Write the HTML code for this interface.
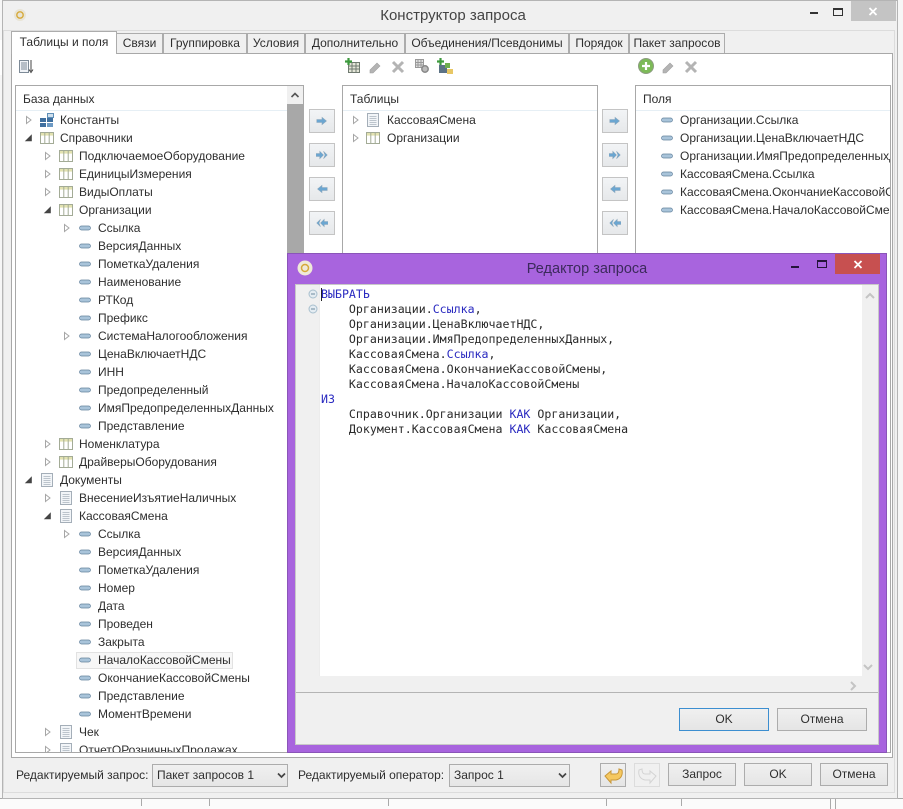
<!DOCTYPE html>
<html><head><meta charset="utf-8"><style>
html,body{margin:0;padding:0;width:903px;height:809px;overflow:hidden;background:#f6f6f6}
body{position:relative;font-family:"Liberation Sans","Noto Sans CJK JP",sans-serif;font-size:12px;color:#2e2e2e}
.b{position:absolute;box-sizing:border-box}
.t{position:absolute;white-space:nowrap;line-height:16px}
.tab{position:absolute;box-sizing:border-box;top:33px;height:20px;background:#f0f0f0;border:1px solid #acacac;border-bottom:none;text-align:center;line-height:19px;white-space:nowrap}
.btn{position:absolute;box-sizing:border-box;background:linear-gradient(#f0f0f0,#e5e5e5);border:1px solid #acacac;text-align:center;line-height:21px}
.ar{position:absolute;box-sizing:border-box;width:26px;height:24px;background:linear-gradient(#f2f4f6,#e6e8ea);border:1px solid #c4c4c4}
.ar svg{position:absolute;left:6px;top:5px;width:12px;height:12px}
.combo{position:absolute;box-sizing:border-box;top:764px;height:23px;background:linear-gradient(#f0f0f0,#e6e6e6);border:1px solid #acacac;line-height:21px;padding-left:4px}
.tree{position:absolute;overflow:hidden}
.r{position:relative;height:18px;line-height:18px;white-space:nowrap}
.r svg{position:absolute;width:16px;height:16px;top:1px}
.l0{padding-left:39px}.l1{padding-left:58px}.l2{padding-left:77px}
.l0 .o{left:0}.l0 .c{left:18px}
.l1 .o{left:19px}.l1 .c{left:37px}
.l2 .o{left:38px}.l2 .c{left:56px}
.ed{position:absolute;left:321px;top:287px;font-family:"DejaVu Sans Mono","Liberation Mono",monospace;font-size:11.6px;line-height:15px;white-space:pre;color:#2a2a2a}
.ed b{font-weight:normal;color:#2a2ac0}
svg{display:block;overflow:visible}
</style></head><body>
<svg width="0" height="0" style="position:absolute">
<symbol id="o" viewBox="0 0 16 16"><path d="M5.500 4.500l4.500 3.500-4.500 3.500z" fill="#fff" stroke="#a6a6a6"/></symbol>
<symbol id="d" viewBox="0 0 16 16"><path d="M10.500 5v6H4.500z" fill="#444" stroke="#444" stroke-width=".6"/></symbol>
<symbol id="t" viewBox="0 0 16 16"><rect x="1.500" y="2.500" width="13" height="11" fill="#fff" stroke="#a3ab96"/><rect x="2" y="3" width="12" height="2.600" fill="#e2e2b0"/><path d="M5.800 3v10M10.200 3v10" stroke="#a3ab96" fill="none"/></symbol>
<symbol id="p" viewBox="0 0 16 16"><path d="M2.500 1.500h11v13h-11z" fill="#f2f5f8" stroke="#a4aeb8"/><path d="M4.500 4.500h7M4.500 6.500h7M4.500 8.500h7M4.500 10.500h7M4.500 12.500h7" stroke="#bcc4cc" fill="none"/></symbol>
<symbol id="f" viewBox="0 0 16 16"><rect x="2.500" y="6" width="11" height="4" rx="2" fill="#a9c4da" stroke="#64829c" stroke-width=".7"/></symbol>
<symbol id="k" viewBox="0 0 16 16"><rect x="1" y="6" width="6" height="4" fill="#3f6f9f"/><rect x="1" y="11" width="6" height="4" fill="#3f6f9f"/><rect x="8" y="11" width="6" height="4" fill="#6d9ac4"/><rect x="8" y="6" width="6" height="4" fill="#3f6f9f"/><rect x="8.500" y="1.500" width="6" height="4" fill="#cfe0ee" stroke="#5f8fb8"/></symbol>
<symbol id="r1" viewBox="0 0 16 16"><path d="M1 6h7V3l6 5-6 5v-3H1z" fill="#6ba6d1" stroke="#8fa8bb" stroke-width=".7"/></symbol>
<symbol id="r2" viewBox="0 0 16 16"><path d="M0 6h5V3l5 5-5 5v-3H0z" fill="#6ba6d1" stroke="#8fa8bb" stroke-width=".7"/><path d="M10 3l5 5-5 5 2-5z" fill="#6ba6d1" stroke="#8fa8bb" stroke-width=".7"/></symbol>
<symbol id="l1" viewBox="0 0 16 16"><path d="M15 6H8V3L2 8l6 5v-3h7z" fill="#6ba6d1" stroke="#8fa8bb" stroke-width=".7"/></symbol>
<symbol id="l2" viewBox="0 0 16 16"><path d="M16 6h-5V3L6 8l5 5v-3h5z" fill="#6ba6d1" stroke="#8fa8bb" stroke-width=".7"/><path d="M6 3L1 8l5 5-2-5z" fill="#6ba6d1" stroke="#8fa8bb" stroke-width=".7"/></symbol>
<symbol id="pen" viewBox="0 0 16 16"><path d="M3 11l7-7 3 3-7 7H3z" fill="#b4b4b4" stroke="#a0a0a0" stroke-width=".6"/></symbol>
<symbol id="x" viewBox="0 0 16 16"><path d="M3 3l10 10M13 3L3 13" stroke="#b4b4b4" stroke-width="3" fill="none"/></symbol>
</svg>

<!-- backdrop fragments -->
<div class="b" style="left:0;top:40px;width:3px;height:35px;background:#fff"></div>
<div class="b" style="left:0;top:798px;width:903px;height:1px;background:#a8a8a8"></div>
<div class="b" style="left:0;top:799px;width:903px;height:10px;background:#fbfbfb"></div>
<div class="b" style="left:141px;top:799px;width:1px;height:7px;background:#aaa"></div>
<div class="b" style="left:209px;top:799px;width:1px;height:7px;background:#aaa"></div>
<div class="b" style="left:388px;top:799px;width:1px;height:7px;background:#aaa"></div>
<div class="b" style="left:606px;top:799px;width:1px;height:7px;background:#aaa"></div>
<div class="b" style="left:681px;top:799px;width:1px;height:7px;background:#aaa"></div>
<div class="b" style="left:830px;top:799px;width:1px;height:10px;background:#aaa"></div>
<div class="b" style="left:835px;top:799px;width:1px;height:10px;background:#aaa"></div>

<!-- main window -->
<div class="b" style="left:2px;top:0;width:896px;height:799px;background:#f0f0f0;border:1px solid #b4b4b4"></div>
<svg class="b" style="left:13px;top:8px;width:14px;height:14px" viewBox="0 0 14 14"><circle cx="7" cy="7" r="6" fill="#e8e4d6"/><circle cx="7" cy="7" r="3.200" fill="none" stroke="#d6a93a" stroke-width="1.400"/></svg>
<div class="t" style="left:303px;width:300px;top:8px;text-align:center;font-size:15px;color:#444">Конструктор запроса</div>
<div class="b" style="left:810px;top:12px;width:8px;height:2px;background:#333"></div>
<div class="b" style="left:833px;top:8px;width:10px;height:8px;border:1px solid #333;border-top-width:2px"></div>
<div class="b" style="left:851px;top:1px;width:45px;height:20px;background:#c4c4c4"></div>
<svg class="b" style="left:868px;top:7px;width:10px;height:9px"><path d="M1.500 1l7 7M8.500 1l-7 7" stroke="#fff" stroke-width="1.800"/></svg>
<div class="b" style="left:3px;top:30px;width:892px;height:763px;border:1px solid #dcdcdc"></div>

<!-- tabs -->
<div class="b" style="left:11px;top:53px;width:882px;height:705px;background:#fff;border:1px solid #a8a8a8"></div>
<div class="tab" style="left:116px;width:47px">Связи</div>
<div class="tab" style="left:163px;width:84px">Группировка</div>
<div class="tab" style="left:247px;width:58px">Условия</div>
<div class="tab" style="left:305px;width:100px">Дополнительно</div>
<div class="tab" style="left:405px;width:164px">Объединения/Псевдонимы</div>
<div class="tab" style="left:569px;width:60px">Порядок</div>
<div class="tab" style="left:629px;width:96px">Пакет запросов</div>
<div class="tab" style="left:11px;top:31px;width:106px;height:23px;background:#fff;z-index:2;line-height:20px">Таблицы и поля</div>

<!-- toolbars -->
<svg class="b" style="left:18px;top:59px;width:16px;height:16px" viewBox="0 0 16 16"><path d="M1.500 1.500h9v12h-9z" fill="#f0f3f7" stroke="#7d8a97"/><path d="M3 4h6M3 6h6M3 8h6M3 10h6" stroke="#7d8a97"/><path d="M13 1v11M11 10.500l2 3 2-3" stroke="#444" fill="none"/></svg>
<svg class="b" style="left:345px;top:58px;width:16px;height:16px" viewBox="0 0 16 16"><rect x="3.500" y="4.500" width="11" height="10" fill="#e4e6d8" stroke="#707a70"/><path d="M7 5v9M11 5v9M4 8h10M4 11h10" stroke="#707a70"/><path d="M3.500 0v7M0 3.500h7" stroke="#3d9a3d" stroke-width="2.200"/></svg>
<svg class="b" style="left:367px;top:59px;width:16px;height:16px"><use href="#pen"/></svg>
<svg class="b" style="left:390px;top:59px;width:16px;height:16px"><use href="#x"/></svg>
<svg class="b" style="left:414px;top:58px;width:16px;height:16px" viewBox="0 0 16 16"><rect x="1.500" y="1.500" width="8" height="8" fill="#e0e0e0" stroke="#999"/><path d="M4 2v7M7 2v7M2 4.500h7M2 7h7" stroke="#999"/><circle cx="11" cy="11" r="3.200" fill="#bbb" stroke="#888" stroke-width="1.500"/></svg>
<svg class="b" style="left:437px;top:58px;width:17px;height:17px" viewBox="0 0 17 17"><path d="M3.500 0v7M0 3.500h7" stroke="#3d9a3d" stroke-width="2.200"/><rect x="2" y="7" width="8" height="8" fill="#5c7285"/><rect x="8" y="5" width="5" height="5" fill="#6fae4f"/><rect x="10" y="11" width="6" height="5" fill="#e8c765"/></svg>
<svg class="b" style="left:638px;top:58px;width:16px;height:16px" viewBox="0 0 16 16"><circle cx="8" cy="8" r="7.500" fill="#7dba58" stroke="#8c9c80"/><path d="M8 4v8M4 8h8" stroke="#fff" stroke-width="2.200"/></svg>
<svg class="b" style="left:660px;top:59px;width:16px;height:16px"><use href="#pen"/></svg>
<svg class="b" style="left:683px;top:59px;width:16px;height:16px"><use href="#x"/></svg>

<!-- left panel -->
<div class="b" style="left:15px;top:85px;width:289px;height:668px;border:1px solid #a8a8a8;background:#fff"></div>
<div class="b" style="left:16px;top:110px;width:271px;height:1px;background:#e6eff5"></div>
<div class="t" style="left:23px;top:91px">База данных</div>
<div class="b" style="left:287px;top:86px;width:16px;height:18px;background:#f0f0f0"></div>
<svg class="b" style="left:290px;top:92px;width:10px;height:7px"><path d="M1.500 5l3.500-3.500 3.500 3.500" fill="none" stroke="#555" stroke-width="1.600"/></svg>
<div class="b" style="left:287px;top:104px;width:16px;height:400px;background:#a8a8a8"></div>
<div class="tree" style="left:21px;top:111px;width:266px;height:641px">
<div style="position:absolute;box-sizing:border-box;left:55px;top:541px;width:157px;height:17px;background:#f7f7f7;border:1px solid #e2e2e2"></div>
<div class="r l0"><svg class="o"><use href="#o"/></svg><svg class="c"><use href="#k"/></svg>Константы</div>
<div class="r l0"><svg class="o"><use href="#d"/></svg><svg class="c"><use href="#t"/></svg>Справочники</div>
<div class="r l1"><svg class="o"><use href="#o"/></svg><svg class="c"><use href="#t"/></svg>ПодключаемоеОборудование</div>
<div class="r l1"><svg class="o"><use href="#o"/></svg><svg class="c"><use href="#t"/></svg>ЕдиницыИзмерения</div>
<div class="r l1"><svg class="o"><use href="#o"/></svg><svg class="c"><use href="#t"/></svg>ВидыОплаты</div>
<div class="r l1"><svg class="o"><use href="#d"/></svg><svg class="c"><use href="#t"/></svg>Организации</div>
<div class="r l2"><svg class="o"><use href="#o"/></svg><svg class="c"><use href="#f"/></svg>Ссылка</div>
<div class="r l2"><svg class="c"><use href="#f"/></svg>ВерсияДанных</div>
<div class="r l2"><svg class="c"><use href="#f"/></svg>ПометкаУдаления</div>
<div class="r l2"><svg class="c"><use href="#f"/></svg>Наименование</div>
<div class="r l2"><svg class="c"><use href="#f"/></svg>РТКод</div>
<div class="r l2"><svg class="c"><use href="#f"/></svg>Префикс</div>
<div class="r l2"><svg class="o"><use href="#o"/></svg><svg class="c"><use href="#f"/></svg>СистемаНалогообложения</div>
<div class="r l2"><svg class="c"><use href="#f"/></svg>ЦенаВключаетНДС</div>
<div class="r l2"><svg class="c"><use href="#f"/></svg>ИНН</div>
<div class="r l2"><svg class="c"><use href="#f"/></svg>Предопределенный</div>
<div class="r l2"><svg class="c"><use href="#f"/></svg>ИмяПредопределенныхДанных</div>
<div class="r l2"><svg class="c"><use href="#f"/></svg>Представление</div>
<div class="r l1"><svg class="o"><use href="#o"/></svg><svg class="c"><use href="#t"/></svg>Номенклатура</div>
<div class="r l1"><svg class="o"><use href="#o"/></svg><svg class="c"><use href="#t"/></svg>ДрайверыОборудования</div>
<div class="r l0"><svg class="o"><use href="#d"/></svg><svg class="c"><use href="#p"/></svg>Документы</div>
<div class="r l1"><svg class="o"><use href="#o"/></svg><svg class="c"><use href="#p"/></svg>ВнесениеИзъятиеНаличных</div>
<div class="r l1"><svg class="o"><use href="#d"/></svg><svg class="c"><use href="#p"/></svg>КассоваяСмена</div>
<div class="r l2"><svg class="o"><use href="#o"/></svg><svg class="c"><use href="#f"/></svg>Ссылка</div>
<div class="r l2"><svg class="c"><use href="#f"/></svg>ВерсияДанных</div>
<div class="r l2"><svg class="c"><use href="#f"/></svg>ПометкаУдаления</div>
<div class="r l2"><svg class="c"><use href="#f"/></svg>Номер</div>
<div class="r l2"><svg class="c"><use href="#f"/></svg>Дата</div>
<div class="r l2"><svg class="c"><use href="#f"/></svg>Проведен</div>
<div class="r l2"><svg class="c"><use href="#f"/></svg>Закрыта</div>
<div class="r l2" style="position:relative"><svg class="c"><use href="#f"/></svg>НачалоКассовойСмены</div>
<div class="r l2"><svg class="c"><use href="#f"/></svg>ОкончаниеКассовойСмены</div>
<div class="r l2"><svg class="c"><use href="#f"/></svg>Представление</div>
<div class="r l2"><svg class="c"><use href="#f"/></svg>МоментВремени</div>
<div class="r l1"><svg class="o"><use href="#o"/></svg><svg class="c"><use href="#p"/></svg>Чек</div>
<div class="r l1"><svg class="o"><use href="#o"/></svg><svg class="c"><use href="#p"/></svg>ОтчетОРозничныхПродажах</div>
</div>

<!-- arrows -->
<div class="ar" style="left:309px;top:109px"><svg><use href="#r1"/></svg></div>
<div class="ar" style="left:309px;top:143px"><svg><use href="#r2"/></svg></div>
<div class="ar" style="left:309px;top:177px"><svg><use href="#l1"/></svg></div>
<div class="ar" style="left:309px;top:211px"><svg><use href="#l2"/></svg></div>
<div class="ar" style="left:602px;top:109px"><svg><use href="#r1"/></svg></div>
<div class="ar" style="left:602px;top:143px"><svg><use href="#r2"/></svg></div>
<div class="ar" style="left:602px;top:177px"><svg><use href="#l1"/></svg></div>
<div class="ar" style="left:602px;top:211px"><svg><use href="#l2"/></svg></div>

<!-- tables panel -->
<div class="b" style="left:342px;top:85px;width:256px;height:668px;border:1px solid #a8a8a8;background:#fff"></div>
<div class="b" style="left:343px;top:110px;width:254px;height:1px;background:#e6eff5"></div>
<div class="t" style="left:350px;top:91px">Таблицы</div>
<div class="tree" style="left:348px;top:111px;width:248px;height:40px">
<div class="r" style="padding-left:39px"><svg style="left:0"><use href="#o"/></svg><svg style="left:17px"><use href="#p"/></svg>КассоваяСмена</div>
<div class="r" style="padding-left:39px"><svg style="left:0"><use href="#o"/></svg><svg style="left:17px"><use href="#t"/></svg>Организации</div>
</div>

<!-- fields panel -->
<div class="b" style="left:635px;top:85px;width:256px;height:668px;border:1px solid #a8a8a8;background:#fff"></div>
<div class="b" style="left:636px;top:110px;width:254px;height:1px;background:#e6eff5"></div>
<div class="t" style="left:643px;top:91px">Поля</div>
<div class="tree" style="left:636px;top:111px;width:254px;height:120px">
<div class="r" style="padding-left:44px"><svg style="left:23px"><use href="#f"/></svg>Организации.Ссылка</div>
<div class="r" style="padding-left:44px"><svg style="left:23px"><use href="#f"/></svg>Организации.ЦенаВключаетНДС</div>
<div class="r" style="padding-left:44px"><svg style="left:23px"><use href="#f"/></svg>Организации.ИмяПредопределенныхДанных</div>
<div class="r" style="padding-left:44px"><svg style="left:23px"><use href="#f"/></svg>КассоваяСмена.Ссылка</div>
<div class="r" style="padding-left:44px"><svg style="left:23px"><use href="#f"/></svg>КассоваяСмена.ОкончаниеКассовойСмены</div>
<div class="r" style="padding-left:44px"><svg style="left:23px"><use href="#f"/></svg>КассоваяСмена.НачалоКассовойСмены</div>
</div>

<!-- bottom bar -->
<div class="t" style="left:16px;top:767px">Редактируемый запрос:</div>
<div class="combo" style="left:152px;width:136px">Пакет запросов 1<svg class="b" style="left:124px;top:7px;width:9px;height:7px"><path d="M1 1.500l3.500 3.500 3.500-3.500" fill="none" stroke="#444" stroke-width="1.700"/></svg></div>
<div class="t" style="left:298px;top:767px">Редактируемый оператор:</div>
<div class="combo" style="left:449px;width:121px">Запрос 1<svg class="b" style="left:108px;top:7px;width:9px;height:7px"><path d="M1 1.500l3.500 3.500 3.500-3.500" fill="none" stroke="#444" stroke-width="1.700"/></svg></div>
<div class="btn" style="left:600px;top:763px;width:26px;height:24px"></div>
<svg class="b" style="left:604px;top:767px;width:19px;height:17px" viewBox="0 0 19 17"><path d="M1 9l6-5v3h5c2 0 3-2 3-5l3 1c1 5-1 9-6 10H7v3z" fill="#f5c860" stroke="#c9983a"/></svg>
<div class="b" style="left:634px;top:763px;width:26px;height:24px;background:#f0f0f0;border:1px solid #dcdcdc"></div>
<svg class="b" style="left:638px;top:767px;width:19px;height:17px" viewBox="0 0 19 17"><path d="M18 9l-6-5v3H7C5 7 4 5 4 2L1 3c-1 5 1 9 6 10h5v3z" fill="#f0f0f0" stroke="#d4d4d4"/></svg>
<div class="btn" style="left:668px;top:763px;width:68px;height:23px">Запрос</div>
<div class="btn" style="left:744px;top:763px;width:68px;height:23px">OK</div>
<div class="btn" style="left:820px;top:763px;width:68px;height:23px">Отмена</div>

<!-- dialog -->
<div class="b" style="left:287px;top:253px;width:600px;height:500px;background:#a864de;border:1px solid #8a55b8"></div>
<svg class="b" style="left:297px;top:260px;width:16px;height:16px" viewBox="0 0 16 16"><circle cx="8" cy="8" r="7.500" fill="#efe9d8"/><circle cx="8" cy="8" r="3.500" fill="none" stroke="#d6a93a" stroke-width="1.500"/></svg>
<div class="t" style="left:437px;width:300px;top:261px;text-align:center;font-size:14.500px;color:#3c2a5c">Редактор запроса</div>
<div class="b" style="left:791px;top:266px;width:8px;height:2px;background:#24143a"></div>
<div class="b" style="left:817px;top:260px;width:10px;height:8px;border:1px solid #24143a;border-top-width:2px"></div>
<div class="b" style="left:835px;top:254px;width:45px;height:20px;background:#c75050"></div>
<svg class="b" style="left:853px;top:260px;width:10px;height:9px"><path d="M1.500 1l7 7M8.500 1l-7 7" stroke="#fff" stroke-width="1.800"/></svg>
<div class="b" style="left:295px;top:284px;width:584px;height:461px;background:#f0f0f0;border:1px solid #c8c8c8"></div>
<div class="b" style="left:319px;top:285px;width:543px;height:391px;background:#fff"></div>
<div class="b" style="left:319px;top:285px;width:1px;height:391px;background:#ececec"></div>
<div class="b" style="left:321px;top:288px;width:1px;height:13px;background:#222"></div>
<svg class="b" style="left:308px;top:289px;width:10px;height:25px"><circle cx="5" cy="5" r="4" fill="#e4ecf2" stroke="#a8bfce"/><path d="M3 5h4" stroke="#6d8a9e"/><circle cx="5" cy="20" r="4" fill="#e4ecf2" stroke="#a8bfce"/><path d="M3 20h4" stroke="#6d8a9e"/></svg>
<div class="ed"><b>ВЫБРАТЬ</b>
    Организации.<b>Ссылка</b>,
    Организации.ЦенаВключаетНДС,
    Организации.ИмяПредопределенныхДанных,
    КассоваяСмена.<b>Ссылка</b>,
    КассоваяСмена.ОкончаниеКассовойСмены,
    КассоваяСмена.НачалоКассовойСмены
<b>ИЗ</b>
    Справочник.Организации <b>КАК</b> Организации,
    Документ.КассоваяСмена <b>КАК</b> КассоваяСмена</div>
<svg class="b" style="left:864px;top:292px;width:12px;height:8px"><path d="M2 6l4-4 4 4" fill="none" stroke="#c4c4c4" stroke-width="2"/></svg>
<svg class="b" style="left:862px;top:663px;width:12px;height:8px"><path d="M2 2l4 4 4-4" fill="none" stroke="#c4c4c4" stroke-width="2"/></svg>
<svg class="b" style="left:849px;top:680px;width:8px;height:12px"><path d="M2 2l4 4-4 4" fill="none" stroke="#c4c4c4" stroke-width="2"/></svg>
<div class="b" style="left:296px;top:692px;width:582px;height:1px;background:#b4b4b4"></div>
<div class="btn" style="left:679px;top:708px;width:90px;height:23px;border-color:#3c8ed0">OK</div>
<div class="btn" style="left:777px;top:708px;width:90px;height:23px">Отмена</div>
</body></html>
